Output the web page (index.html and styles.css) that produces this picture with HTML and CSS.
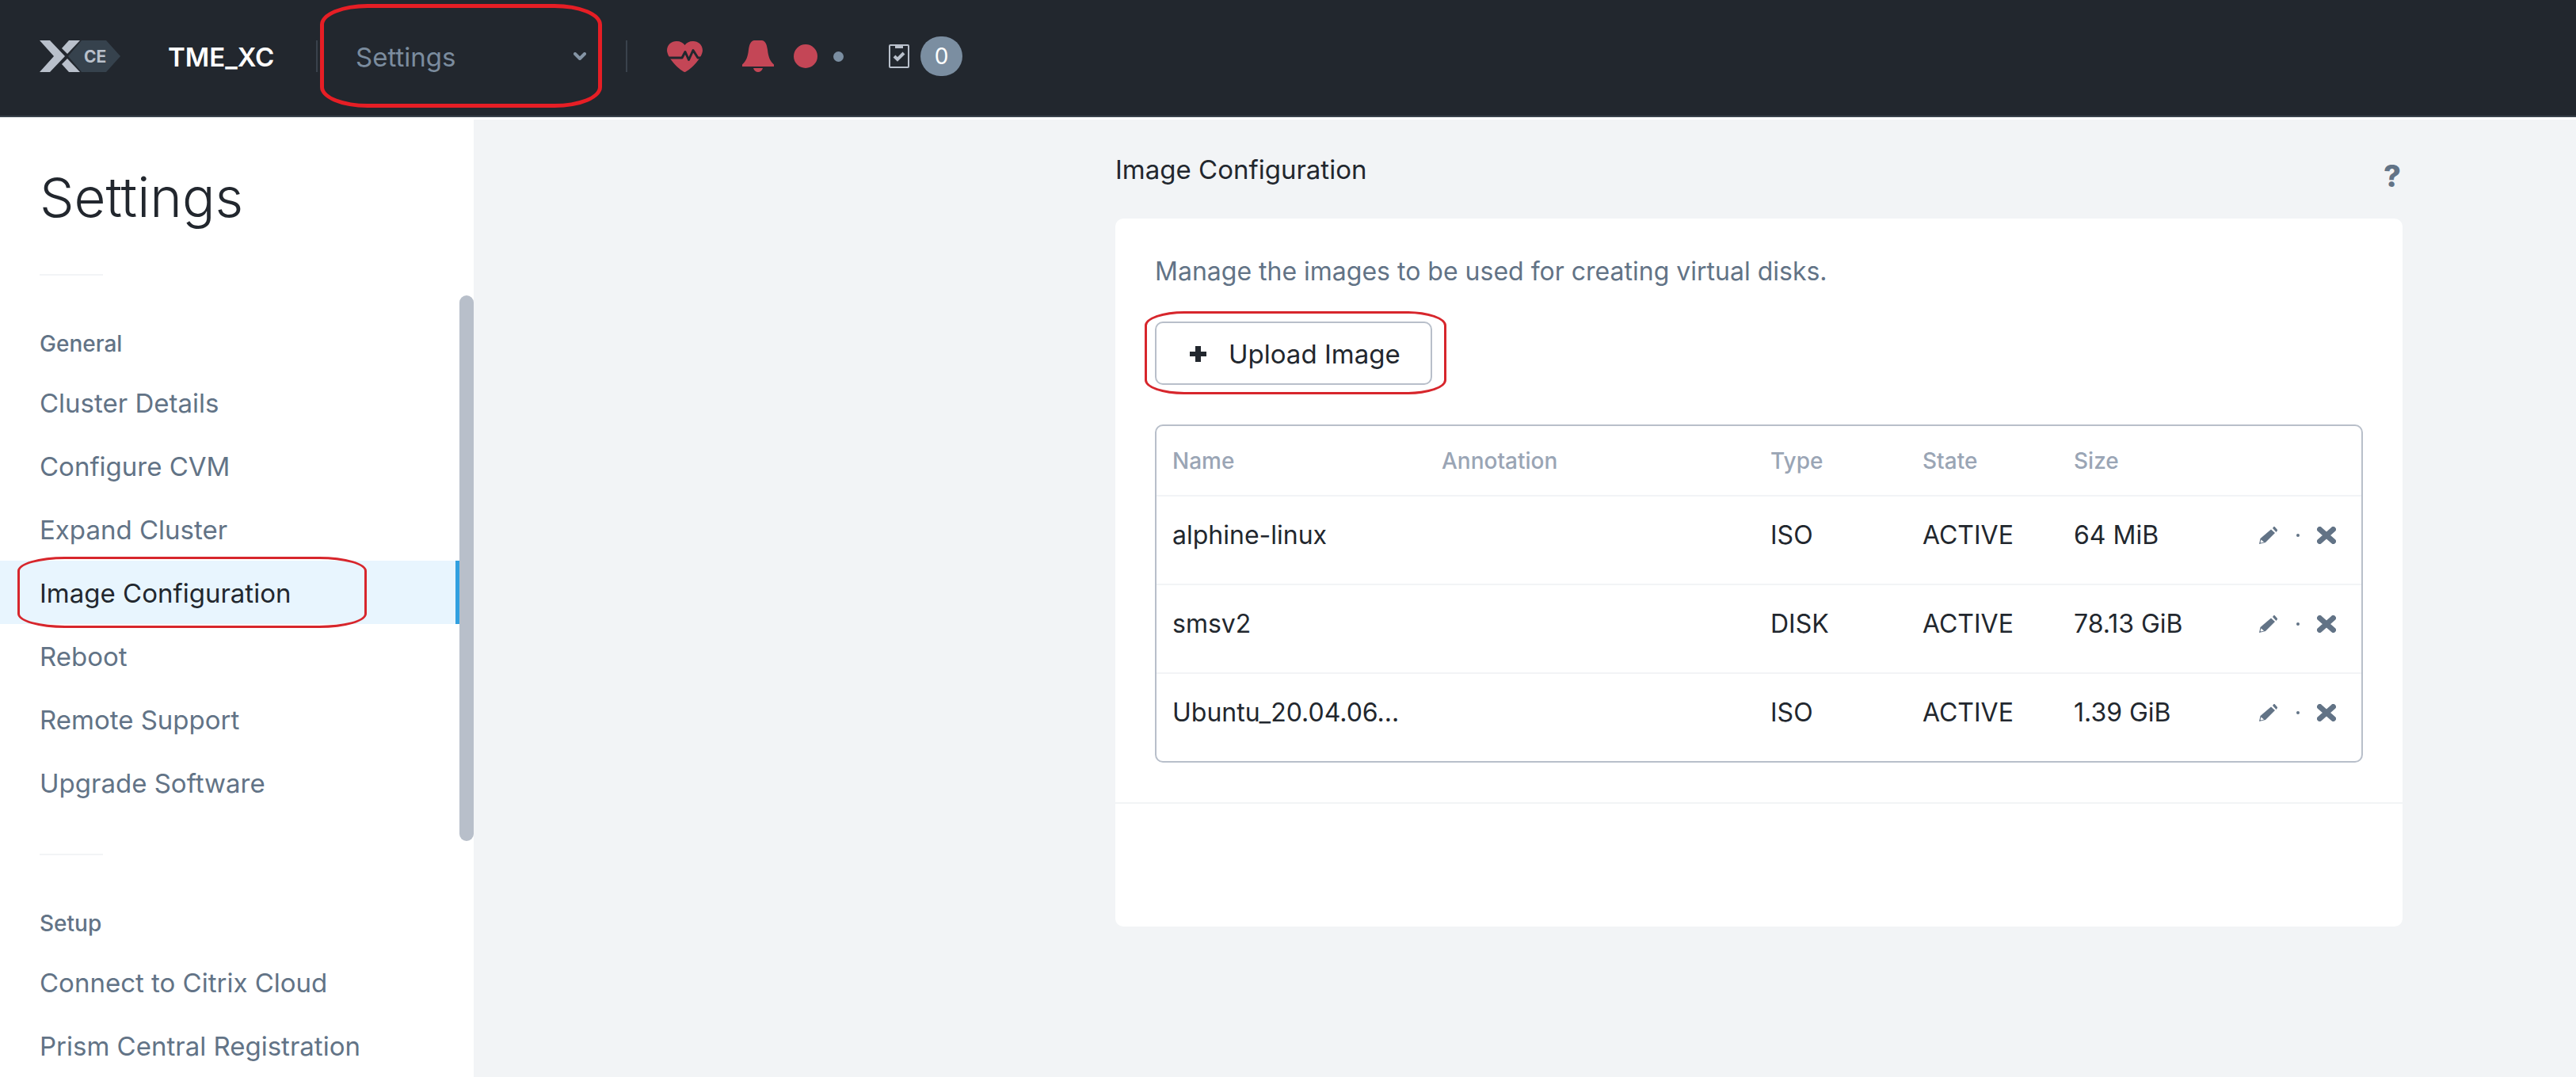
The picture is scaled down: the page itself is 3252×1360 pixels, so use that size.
FILE: index.html
```html
<!DOCTYPE html>
<html lang="en">
<head>
<meta charset="utf-8">
<meta name="viewport" content="width=device-width, initial-scale=1">
<title>Settings - Image Configuration</title>
<link rel="stylesheet" href="styles.css">
</head>
<body>
<header class="topbar">
  <a class="logo" href="#" aria-label="Home">
    <svg width="102" height="40" viewBox="0 0 102 40">
      <path d="M53 0h31l18 20-18 20H53L36 20z" fill="#36424d"/>
      <path d="M0 0h13l19 20-19 20H0l18-20z" fill="#b9c0cb"/>
      <path d="M37 0h14L35 17l-7-7z" fill="#b9c0cb"/>
      <path d="M28 30l7-7 16 17H37z" fill="#b9c0cb"/>
      <text class="logo-tag" x="56" y="28">CE</text>
    </svg>
  </a>
  <span class="cluster-name">TME_XC</span>
  <div class="page-picker marked marked-header">
    <select class="page-select" aria-label="Page">
      <option>Settings</option>
    </select>
    <svg class="page-chevron" width="16" height="10" viewBox="0 0 16 10"><path d="M2 2l6 6 6-6" fill="none" stroke="#8494a5" stroke-width="4" stroke-linecap="round" stroke-linejoin="round"/></svg>
  </div>
  <div class="status">
    <button class="icon-button" type="button" aria-label="Health">
      <svg width="45" height="40" viewBox="0 0 45 40">
        <path d="M22.500 40C18 39 1 24 0 13 0 5 6 1 12 1c5 0 8.500 2 10.500 5C24.500 3 28 1 33 1c6 0 12 4 12 12-1 11-18 26-22.500 27z" fill="#c44656"/>
        <path d="M0 22h19l4-7.500 4.500 10 5.500-12 6 9.500h6" fill="none" stroke="#22272e" stroke-width="3" stroke-linejoin="round"/>
      </svg>
    </button>
    <button class="icon-button" type="button" aria-label="Alerts">
      <svg width="40" height="40" viewBox="0 0 40 40">
        <path d="M15 0h10c5 1 6 6 7 12 1 9 3 14 8 18.500V33H0v-2.500C5 26 7 21 8 12 9 6 10 1 15 0z" fill="#c44656"/>
        <path d="M14 35h12c-1 3.500-3.500 5-6 5s-5-1.500-6-5z" fill="#c44656"/>
      </svg>
    </button>
    <span class="alert-dot"></span>
    <span class="event-dot"></span>
    <button class="icon-button tasks" type="button" aria-label="Tasks">
      <svg width="26" height="30" viewBox="0 0 26 30">
        <rect x="1" y="1" width="24" height="28" rx="1" fill="none" stroke="#b9c0cb" stroke-width="2"/>
        <path d="M8 2h10v3H8z" fill="#b9c0cb"/>
        <path d="M7 15l4 4 8-8" fill="none" stroke="#b9c0cb" stroke-width="4"/>
      </svg>
      <span class="task-count">0</span>
    </button>
  </div>
</header>
<div class="layout">
  <aside class="sidebar">
    <h1 class="sidebar-title">Settings</h1>
    <nav class="sidebar-nav">
      <section class="nav-group">
        <h2 class="nav-label">General</h2>
        <ul class="nav-list">
          <li><a class="nav-link" href="#">Cluster Details</a></li>
          <li><a class="nav-link" href="#">Configure CVM</a></li>
          <li><a class="nav-link" href="#">Expand Cluster</a></li>
          <li><a class="nav-link nav-link-active marked marked-nav" href="#" aria-current="page">Image Configuration</a></li>
          <li><a class="nav-link" href="#">Reboot</a></li>
          <li><a class="nav-link" href="#">Remote Support</a></li>
          <li><a class="nav-link" href="#">Upgrade Software</a></li>
        </ul>
      </section>
      <section class="nav-group">
        <h2 class="nav-label">Setup</h2>
        <ul class="nav-list">
          <li><a class="nav-link" href="#">Connect to Citrix Cloud</a></li>
          <li><a class="nav-link" href="#">Prism Central Registration</a></li>
        </ul>
      </section>
      <div class="scroll-thumb"></div>
    </nav>
  </aside>
  <main class="main">
    <div class="content">
      <div class="content-head">
        <h2 class="content-title">Image Configuration</h2>
        <button class="help" type="button" aria-label="Help">?</button>
      </div>
      <div class="card">
        <div class="card-body">
          <p class="intro">Manage the images to be used for creating virtual disks.</p>
          <button class="upload marked marked-upload" type="button">
            <svg width="21" height="20" viewBox="0 0 21 20"><path d="M7 0h7v7h7v6h-7v7H7v-7H0V7h7z" fill="#22272e"/></svg>
            Upload Image
          </button>
          <div class="table-frame">
            <table class="images">
              <colgroup><col class="col-name"><col><col class="col-type"><col class="col-state"><col class="col-size"><col class="col-actions"></colgroup>
              <thead>
                <tr><th>Name</th><th>Annotation</th><th>Type</th><th>State</th><th>Size</th><th></th></tr>
              </thead>
              <tbody>
                <tr>
                  <td>alphine-linux</td><td></td><td>ISO</td><td>ACTIVE</td><td>64 MiB</td>
                  <td><div class="actions">
                    <button class="icon-button" type="button" aria-label="Edit"><svg width="24" height="22" viewBox="0 0 24 22"><use href="#pencil"/></svg></button>
                    <span class="actions-dot"></span>
                    <button class="icon-button" type="button" aria-label="Delete"><svg width="24" height="22" viewBox="0 0 24 22"><use href="#cross"/></svg></button>
                  </div></td>
                </tr>
                <tr>
                  <td>smsv2</td><td></td><td>DISK</td><td>ACTIVE</td><td>78.13 GiB</td>
                  <td><div class="actions">
                    <button class="icon-button" type="button" aria-label="Edit"><svg width="24" height="22" viewBox="0 0 24 22"><use href="#pencil"/></svg></button>
                    <span class="actions-dot"></span>
                    <button class="icon-button" type="button" aria-label="Delete"><svg width="24" height="22" viewBox="0 0 24 22"><use href="#cross"/></svg></button>
                  </div></td>
                </tr>
                <tr>
                  <td>Ubuntu_20.04.06...</td><td></td><td>ISO</td><td>ACTIVE</td><td>1.39 GiB</td>
                  <td><div class="actions">
                    <button class="icon-button" type="button" aria-label="Edit"><svg width="24" height="22" viewBox="0 0 24 22"><use href="#pencil"/></svg></button>
                    <span class="actions-dot"></span>
                    <button class="icon-button" type="button" aria-label="Delete"><svg width="24" height="22" viewBox="0 0 24 22"><use href="#cross"/></svg></button>
                  </div></td>
                </tr>
              </tbody>
            </table>
          </div>
        </div>
        <div class="card-footer"></div>
      </div>
    </div>
  </main>
</div>
<svg class="symbols" aria-hidden="true">
  <symbol id="pencil" viewBox="0 0 24 22">
    <path d="M17 2l1.500-2h1L23 4v1l-1.500 2z" fill="#627386"/>
    <path d="M15 3.500l5 4.500L8 20l-8 2 1.500-7z" fill="#627386"/>
    <path d="M2.500 16.500l3.500 3-3.500 1-1-1z" fill="#fff"/>
  </symbol>
  <symbol id="cross" viewBox="0 0 24 22">
    <path d="M3.500 3.500l17 15M20.500 3.500l-17 15" fill="none" stroke="#627386" stroke-width="7" stroke-linecap="round"/>
  </symbol>
</svg>
</body>
</html>
```
FILE: styles.css
```css
:root {
  --ink: #22272e;
  --slate: #627386;
  --line: #f2f4f6;
  --edge: #b8bfca;
}

* {
  box-sizing: border-box;
}

body {
  margin: 0;
  display: flex;
  flex-direction: column;
  min-height: 100vh;
  background: #f2f4f6;
  color: var(--ink);
  font: 32px/40px Inter, "Liberation Sans", sans-serif;
}

h1, h2, p, ul {
  margin: 0;
  padding: 0;
  font-weight: 400;
}

button, select {
  margin: 0;
  padding: 0;
  border: 0;
  background: none;
  color: inherit;
  font: inherit;
  cursor: pointer;
}

svg {
  display: block;
  flex: none;
}

.symbols {
  position: absolute;
  width: 0;
  height: 0;
}

/* Red rings that call out the steps to follow */
.marked {
  position: relative;
}

.marked::after {
  content: "";
  position: absolute;
  pointer-events: none;
}

.marked-header::after {
  inset: -46px 30px -45px 3px;
  border: 5px solid #e61e25;
  border-radius: 60px / 26px;
}

.marked-nav::after {
  inset: -5px 112px -5px 22px;
  border: 3px solid #d7262c;
  border-radius: 60px / 18px;
}

.marked-upload::after {
  inset: -15px -20px -14px -15px;
  border: 3px solid #d7262c;
  border-radius: 50px / 18px;
}

/* Top bar */
.topbar {
  display: flex;
  align-items: center;
  padding: 0 50px 4px;
  height: 148px;
  border-bottom: 2px solid #3a424c;
  background: var(--ink);
}

.logo-tag {
  fill: #b9c0cb;
  font-size: 21px;
  font-weight: 700;
}

.cluster-name {
  width: 187px;
  margin-left: 60px;
  padding-top: 2px;
  color: #fff;
  font-size: 33px;
  font-weight: 600;
}

.page-picker {
  display: flex;
  align-items: center;
  width: 393px;
  height: 40px;
  padding-right: 50px;
  border: solid #3a424c;
  border-width: 0 2px;
}

.page-select {
  flex: 1;
  padding: 2px 0 0 48px;
  appearance: none;
  color: #7b8c9e;
  font-size: 33px;
}

.status {
  display: flex;
  align-items: center;
  margin-left: 50px;
}

.icon-button {
  display: flex;
  align-items: center;
}

.status .icon-button + .icon-button {
  margin-left: 50px;
}

.alert-dot {
  width: 30px;
  height: 30px;
  margin-left: 25px;
  border-radius: 50%;
  background: #c44656;
}

.event-dot {
  width: 13px;
  height: 13px;
  margin: 0 57px 0 20px;
  border-radius: 50%;
  background: #7b8ea1;
}

.tasks {
  gap: 14px;
}

.task-count {
  width: 53px;
  border-radius: 25px;
  background: #7b8ea1;
  color: #fff;
  font-size: 28px;
  line-height: 50px;
}

/* Page columns */
.layout {
  display: flex;
  flex: 1;
}

.sidebar {
  flex: none;
  width: 598px;
  padding-top: 61px;
  background: #fff;
}

.sidebar-title {
  padding-left: 50px;
  font-size: 69px;
  font-weight: 300;
  line-height: 80px;
}

.sidebar-nav {
  position: relative;
  padding-right: 18px;
}

.nav-group {
  padding-top: 57px;
}

.nav-group + .nav-group {
  padding-top: 50px;
}

.nav-group::before {
  content: "";
  display: block;
  width: 80px;
  height: 2px;
  margin-left: 50px;
  background: var(--line);
}

.nav-label {
  padding: 66px 0 14px 50px;
  color: var(--slate);
  font-size: 28px;
  font-weight: 500;
  line-height: 40px;
}

.nav-list {
  list-style: none;
}

.nav-link {
  display: block;
  padding: 21px 0 19px 50px;
  color: var(--slate);
  font-size: 33px;
  text-decoration: none;
}

.nav-link-active {
  border-right: 5px solid #31a0e0;
  background: #e8f5fe;
  color: var(--ink);
}

.scroll-thumb {
  position: absolute;
  top: 84px;
  right: 0;
  width: 18px;
  height: 689px;
  border-radius: 9px;
  background: var(--edge);
}

.main {
  display: grid;
  grid-template-columns: 810fr 1625fr 219fr;
  flex: 1;
  align-items: start;
  padding-top: 43px;
  border-top: 3px solid #fff;
}

.content {
  grid-column: 2;
}

.content-head {
  display: flex;
  align-items: flex-start;
  justify-content: space-between;
  height: 82px;
}

.content-title {
  font-size: 33px;
}

.help {
  padding: 8px 2px 0 0;
  color: var(--slate);
  font-size: 38px;
  font-weight: 800;
}

/* Image list */
.card {
  border-radius: 10px;
  background: #fff;
}

.card-body {
  padding: 47px 50px 50px;
}

.intro {
  margin-bottom: 43px;
  color: var(--slate);
}

.upload {
  display: flex;
  align-items: center;
  gap: 28px;
  min-width: 350px;
  height: 80px;
  margin-bottom: 50px;
  padding: 2px 34px 0 42px;
  border: 2px solid var(--edge);
  border-radius: 10px;
  font-size: 33px;
  white-space: nowrap;
}

.table-frame {
  border: 2px solid var(--edge);
  border-radius: 10px;
}

.images {
  width: 100%;
  table-layout: fixed;
  border-spacing: 0;
}

.col-name { width: 340px; }
.col-type { width: 192px; }
.col-state { width: 191px; }
.col-size { width: 214px; }
.col-actions { width: 169px; }

th, td {
  padding: 29px 0 41px 20px;
  border-bottom: 2px solid var(--line);
  text-align: left;
  vertical-align: top;
  white-space: nowrap;
}

th {
  padding: 24px 0 23px 20px;
  color: #9aa5b5;
  font-size: 28px;
  font-weight: 500;
}

tr:last-child td {
  border-bottom: 0;
}

.actions {
  display: flex;
  align-items: center;
  justify-content: space-between;
  height: 40px;
  margin: 0 32px 0 20px;
}

.actions-dot {
  width: 4px;
  height: 4px;
  border-radius: 50%;
  background: var(--slate);
}

.card-footer {
  height: 157px;
  border-top: 2px solid var(--line);
}
```
